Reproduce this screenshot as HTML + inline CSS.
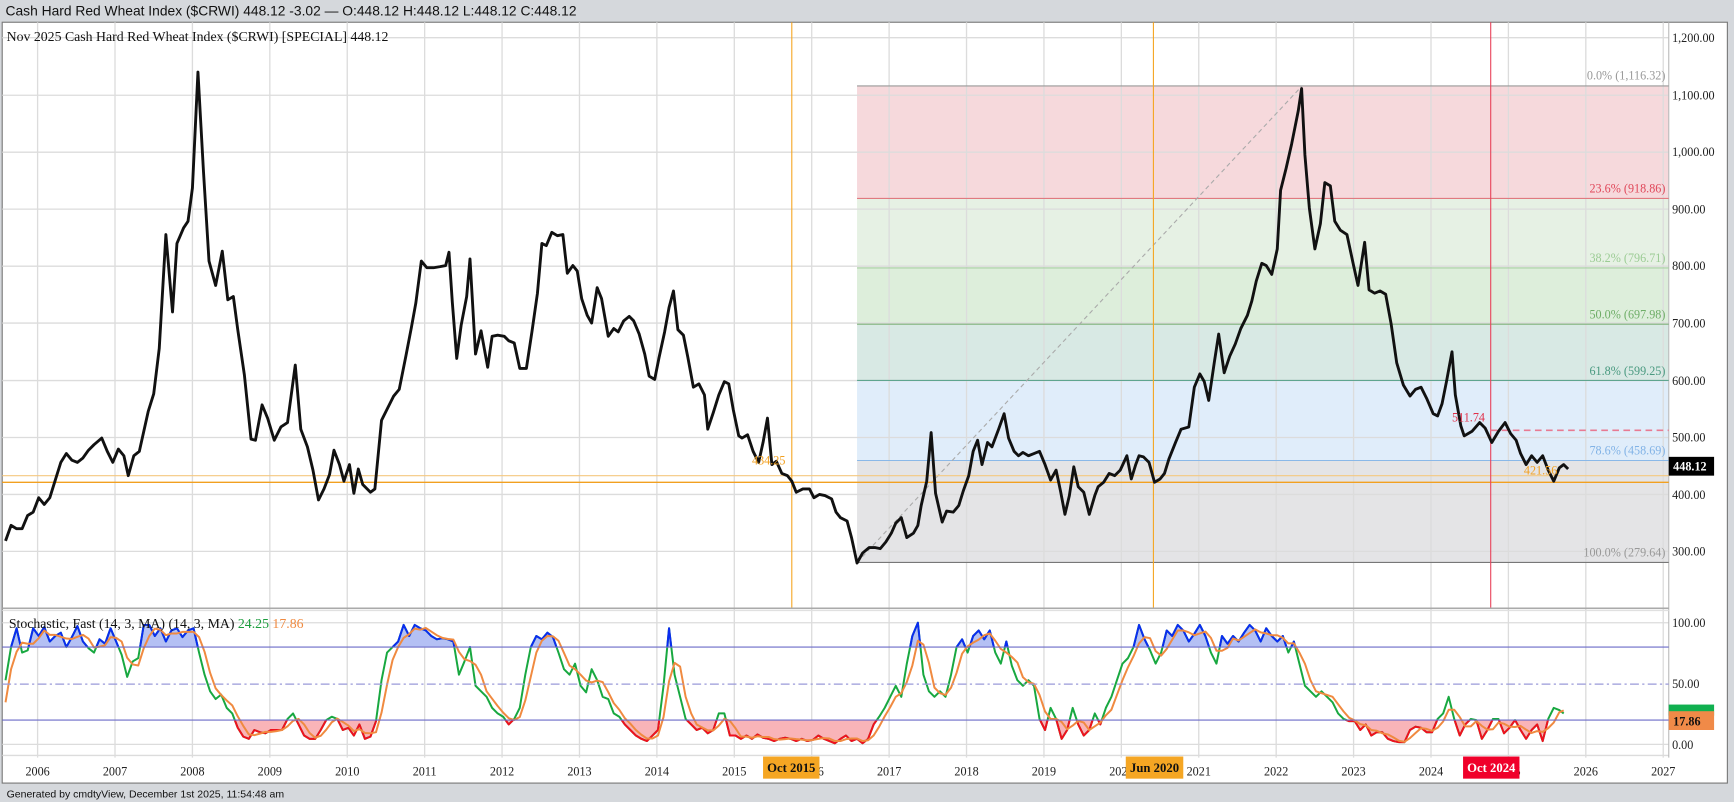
<!DOCTYPE html>
<html><head><meta charset="utf-8"><style>
html,body{margin:0;padding:0;background:#d5d8dc;overflow:hidden}
svg{display:block}
</style></head><body>
<svg width="1734" height="802" viewBox="0 0 1568 725" xmlns="http://www.w3.org/2000/svg">
<defs>
<clipPath id="above"><rect x="0" y="550" width="1509" height="35"/></clipPath>
<clipPath id="below"><rect x="0" y="651" width="1509" height="40"/></clipPath>
</defs>
<rect x="0" y="0" width="1568" height="725" fill="#d5d8dc"/>
<text x="5" y="14" font-family="Liberation Sans, sans-serif" font-size="12.5" fill="#111">Cash Hard Red Wheat Index ($CRWI) 448.12 -3.02 — O:448.12 H:448.12 L:448.12 C:448.12</text>
<rect x="2" y="20" width="1560" height="688" fill="#fff" stroke="#777" stroke-width="1"/>
<rect x="775" y="77.6" width="734" height="101.7" fill="#f6d9dc"/>
<rect x="775" y="179.3" width="734" height="62.9" fill="#e6f1e4"/>
<rect x="775" y="242.2" width="734" height="50.8" fill="#ddeedb"/>
<rect x="775" y="293" width="734" height="50.9" fill="#d8e9e4"/>
<rect x="775" y="343.9" width="734" height="72.4" fill="#e0edfa"/>
<rect x="775" y="416.3" width="734" height="92.2" fill="#e4e4e6"/>
<g stroke="#dcdcdc" stroke-width="1.2">
<line x1="2" x2="1509" y1="34" y2="34"/><line x1="2" x2="1509" y1="86" y2="86"/><line x1="2" x2="1509" y1="137.5" y2="137.5"/><line x1="2" x2="1509" y1="189" y2="189"/><line x1="2" x2="1509" y1="240.6" y2="240.6"/><line x1="2" x2="1509" y1="292" y2="292"/><line x1="2" x2="1509" y1="344" y2="344"/><line x1="2" x2="1509" y1="395.5" y2="395.5"/><line x1="2" x2="1509" y1="447" y2="447"/><line x1="2" x2="1509" y1="498.5" y2="498.5"/>
<line x1="2" x2="1509" y1="563" y2="563"/><line x1="2" x2="1509" y1="673" y2="673"/><line x1="2" x2="1509" y1="683" y2="683"/>
<line x1="34" x2="34" y1="20" y2="685"/><line x1="104" x2="104" y1="20" y2="685"/><line x1="174" x2="174" y1="20" y2="685"/><line x1="244" x2="244" y1="20" y2="685"/><line x1="314" x2="314" y1="20" y2="685"/><line x1="384" x2="384" y1="20" y2="685"/><line x1="454" x2="454" y1="20" y2="685"/><line x1="524" x2="524" y1="20" y2="685"/><line x1="594" x2="594" y1="20" y2="685"/><line x1="664" x2="664" y1="20" y2="685"/><line x1="734" x2="734" y1="20" y2="685"/><line x1="804" x2="804" y1="20" y2="685"/><line x1="874" x2="874" y1="20" y2="685"/><line x1="944" x2="944" y1="20" y2="685"/><line x1="1014" x2="1014" y1="20" y2="685"/><line x1="1084" x2="1084" y1="20" y2="685"/><line x1="1154" x2="1154" y1="20" y2="685"/><line x1="1224" x2="1224" y1="20" y2="685"/><line x1="1294" x2="1294" y1="20" y2="685"/><line x1="1364" x2="1364" y1="20" y2="685"/><line x1="1434" x2="1434" y1="20" y2="685"/><line x1="1504" x2="1504" y1="20" y2="685"/>
</g>
<line x1="1509" x2="1509" y1="20" y2="685" stroke="#bbb" stroke-width="1"/>
<line x1="775" x2="1509" y1="77.6" y2="77.6" stroke="#999"/>
<line x1="775" x2="1509" y1="179.3" y2="179.3" stroke="#e07a80"/>
<line x1="775" x2="1509" y1="242.2" y2="242.2" stroke="#a8d0a2"/>
<line x1="775" x2="1509" y1="293" y2="293" stroke="#7fb27a"/>
<line x1="775" x2="1509" y1="343.9" y2="343.9" stroke="#5fa58f"/>
<line x1="775" x2="1509" y1="416.3" y2="416.3" stroke="#8ab8e8"/>
<line x1="775" x2="1509" y1="508.5" y2="508.5" stroke="#777"/>
<line x1="775" y1="508.5" x2="1177" y2="78" stroke="#aaa" stroke-dasharray="4,3"/>
<g font-family="Liberation Serif, serif" font-size="11" text-anchor="end">
<text x="1506" y="72" fill="#999">0.0% (1,116.32)</text>
<text x="1506" y="174" fill="#e0485a">23.6% (918.86)</text>
<text x="1506" y="237" fill="#9ccc95">38.2% (796.71)</text>
<text x="1506" y="288" fill="#6fae68">50.0% (697.98)</text>
<text x="1506" y="339" fill="#4a9a80">61.8% (599.25)</text>
<text x="1506" y="411" fill="#82b3e6">78.6% (458.69)</text>
<text x="1506" y="503" fill="#999">100.0% (279.64)</text>
</g>
<line x1="2" x2="1509" y1="430" y2="430" stroke="#f5c880" stroke-width="1"/>
<line x1="2" x2="1509" y1="436" y2="436" stroke="#f2a020" stroke-width="1.2"/>
<line x1="716" x2="716" y1="20" y2="550" stroke="#f5a623" stroke-width="1"/>
<line x1="1043" x2="1043" y1="20" y2="550" stroke="#f5a623" stroke-width="1"/>
<line x1="1348" x2="1348" y1="20" y2="550" stroke="#e8425a" stroke-width="1"/>
<line x1="1348" x2="1509" y1="389" y2="389" stroke="#e87a92" stroke-width="1.5" stroke-dasharray="6,4"/>
<polyline fill="none" stroke="#111" stroke-width="2.6" stroke-linejoin="round" points="5,489 10,475 15,478 20,478 25,466 30,463 35,450 40,456 45,450 50,434 55,418 60,410 65,416 70,418 75,414 80,407 85,402 92,396 97,408 102,418 107,406 112,412 116,430 121,412 126,408 130,390 134,372 139,356 144,315 150,212 156,282 160,220 166,206 170,200 174,170 179,65 184,155 189,236 195,258 201,227 206,271 211,268 215,298 221,339 227,397 231,398 237,366 242,378 248,398 254,386 260,382 267,330 272,388 278,404 283,425 288,452 293,442 298,429 302,407 307,420 311,435 316,420 320,446 324,424 328,438 335,445 339,442 345,380 350,370 356,358 361,352 367,322 372,296 376,274 381,236 386,242 392,242 398,241 403,240 406,228 409,273 413,324 417,294 422,268 425,234 430,320 435,299 441,332 445,304 450,303 456,304 460,308 465,310 470,333 476,333 481,300 486,265 490,220 494,222 499,210 504,213 509,212 513,247 518,240 522,245 526,270 531,285 535,292 540,260 544,270 550,304 555,297 559,300 564,290 569,286 573,290 578,302 583,320 587,340 592,343 596,323 601,300 605,278 609,263 613,298 618,303 622,323 627,350 632,347 637,357 640,388 645,373 650,357 655,345 659,347 663,370 668,394 671,396 676,393 681,408 686,418 690,400 694,378 698,420 702,417 707,428 712,430 716,435 720,445 726,442 732,442 736,450 741,447 746,448 752,451 756,463 760,468 766,471 770,486 775,509 780,500 786,495 791,495 796,496 801,490 806,482 810,473 815,468 820,486 826,482 830,475 833,457 838,435 842,391 846,446 852,472 856,462 862,463 867,457 871,444 876,430 880,408 884,398 888,420 893,400 897,404 903,388 908,374 912,396 917,408 921,412 925,409 930,412 935,410 940,408 945,420 950,434 955,425 959,444 963,465 967,448 971,422 975,440 980,445 985,465 990,448 993,440 998,436 1003,428 1008,430 1013,425 1019,412 1023,433 1027,420 1030,412 1034,413 1039,418 1044,436 1049,433 1053,428 1057,415 1063,400 1068,388 1075,386 1080,350 1085,338 1089,345 1093,362 1098,328 1102,302 1107,337 1112,322 1117,311 1122,297 1128,285 1132,272 1136,254 1141,238 1145,240 1150,248 1155,225 1158,172 1163,152 1168,130 1174,100 1177,80 1180,140 1184,188 1189,225 1194,202 1198,165 1203,168 1207,200 1212,208 1218,212 1224,240 1228,258 1234,219 1238,262 1243,265 1248,263 1253,266 1258,293 1263,328 1269,348 1275,358 1280,352 1285,350 1290,360 1296,374 1300,376 1304,365 1308,345 1313,318 1316,357 1321,385 1324,394 1331,390 1338,382 1343,387 1349,400 1355,390 1361,382 1366,392 1371,398 1375,410 1380,420 1385,412 1390,418 1395,412 1400,425 1405,435 1410,423 1414,420 1418,424"/>
<g font-family="Liberation Serif, serif" font-size="11">
<text x="680" y="420" fill="#f2a020">434.25</text>
<text x="1313" y="381" fill="#e0304a">511.74</text>
<text x="1378" y="429" fill="#f2a020">421.56</text>
</g>
<text x="6" y="37" font-family="Liberation Serif, serif" font-size="12.5" fill="#111">Nov 2025 Cash Hard Red Wheat Index ($CRWI) [SPECIAL] 448.12</text>
<line x1="2" x2="1509" y1="550" y2="550" stroke="#aaa" stroke-width="1.5"/>
<line x1="2" x2="1509" y1="552" y2="552" stroke="#e0e0e0" stroke-width="1"/>
<g id="stoch"></g>
<line x1="2" x2="1509" y1="585" y2="585" stroke="#6b6bc8" stroke-width="1"/>
<line x1="2" x2="1509" y1="651" y2="651" stroke="#6b6bc8" stroke-width="1"/>
<line x1="2" x2="1509" y1="618.5" y2="618.5" stroke="#9a9ad8" stroke-width="1.2" stroke-dasharray="8,3,2,3"/>
<text x="8" y="568" font-family="Liberation Serif, serif" font-size="12.5" fill="#111">Stochastic, Fast (14, 3, MA)  (14, 3, MA) <tspan fill="#1a9c3c">24.25</tspan> <tspan fill="#f08a40">17.86</tspan></text>
<g font-family="Liberation Serif, serif" font-size="11" fill="#222">
<text x="1512" y="38">1,200.00</text><text x="1512" y="90">1,100.00</text><text x="1512" y="141">1,000.00</text><text x="1512" y="193">900.00</text><text x="1512" y="244">800.00</text><text x="1512" y="296">700.00</text><text x="1512" y="348">600.00</text><text x="1512" y="399">500.00</text><text x="1512" y="451">400.00</text><text x="1512" y="502">300.00</text>
<text x="1512" y="567">100.00</text><text x="1512" y="622">50.00</text><text x="1512" y="677">0.00</text>
</g>
<rect x="1509" y="413" width="41" height="17" fill="#000"/>
<text x="1513" y="425.5" font-family="Liberation Serif, serif" font-size="11" font-weight="bold" fill="#fff">448.12</text>
<rect x="1509" y="637" width="41" height="10" fill="#10b050"/>
<rect x="1509" y="643" width="41" height="17" fill="#f08a48"/>
<text x="1513" y="656" font-family="Liberation Serif, serif" font-size="11" font-weight="bold" fill="#111">17.86</text>
<g font-family="Liberation Serif, serif" font-size="11" fill="#222" text-anchor="middle">
<text x="34" y="701">2006</text><text x="104" y="701">2007</text><text x="174" y="701">2008</text><text x="244" y="701">2009</text><text x="314" y="701">2010</text><text x="384" y="701">2011</text><text x="454" y="701">2012</text><text x="524" y="701">2013</text><text x="594" y="701">2014</text><text x="664" y="701">2015</text><text x="734" y="701">2016</text><text x="804" y="701">2017</text><text x="874" y="701">2018</text><text x="944" y="701">2019</text><text x="1014" y="701">2020</text><text x="1084" y="701">2021</text><text x="1154" y="701">2022</text><text x="1224" y="701">2023</text><text x="1294" y="701">2024</text><text x="1364" y="701">2025</text><text x="1434" y="701">2026</text><text x="1504" y="701">2027</text>
</g>
<rect x="690" y="684" width="51" height="20" fill="#f5a623"/>
<text x="715.5" y="698" text-anchor="middle" font-family="Liberation Serif, serif" font-size="11.5" font-weight="bold" fill="#111">Oct 2015</text>
<rect x="1018" y="684" width="52" height="20" fill="#f5a623"/>
<text x="1044" y="698" text-anchor="middle" font-family="Liberation Serif, serif" font-size="11.5" font-weight="bold" fill="#111">Jun 2020</text>
<rect x="1323" y="684" width="51" height="20" fill="#f0002a"/>
<text x="1348.5" y="698" text-anchor="middle" font-family="Liberation Serif, serif" font-size="11.5" font-weight="bold" fill="#fff">Oct 2024</text>
<text x="6" y="721" font-family="Liberation Sans, sans-serif" font-size="9.5" fill="#111">Generated by cmdtyView, December 1st 2025, 11:54:48 am</text>
</svg>
<script>
var K=[[5,615],[10,585],[15,568],[20,590],[25,588],[30,568],[35,575],[40,567],[45,580],[50,575],[55,572],[60,585],[65,576],[70,566],[75,580],[80,586],[85,590],[90,578],[95,582],[100,568],[105,580],[110,592],[115,612],[120,598],[125,595],[130,565],[135,565],[140,575],[145,568],[150,580],[155,570],[160,568],[165,576],[170,570],[175,568],[180,590],[185,610],[190,625],[195,632],[200,628],[205,640],[210,645],[215,658],[220,666],[225,668],[230,660],[235,662],[240,663],[245,660],[250,660],[255,660],[260,650],[265,645],[270,655],[275,665],[280,668],[285,668],[290,660],[295,651],[300,648],[305,650],[310,660],[315,658],[320,665],[325,655],[330,668],[335,666],[340,652],[345,615],[350,590],[355,585],[360,580],[365,565],[370,575],[375,565],[380,568],[385,570],[390,575],[395,578],[400,577],[405,578],[410,580],[415,610],[420,598],[425,585],[430,620],[435,625],[440,630],[445,640],[450,645],[455,648],[460,655],[465,650],[470,640],[475,610],[480,585],[485,575],[490,578],[495,572],[500,576],[505,590],[510,605],[515,610],[520,600],[525,620],[530,626],[535,605],[540,615],[545,630],[550,632],[555,645],[560,648],[565,655],[570,660],[575,665],[580,668],[585,670],[590,665],[595,660],[600,620],[605,568],[610,610],[615,630],[620,650],[625,655],[630,660],[635,658],[640,663],[645,660],[650,645],[655,645],[660,665],[665,665],[670,668],[675,665],[680,668],[685,664],[690,667],[695,668],[700,670],[705,668],[710,667],[715,668],[720,670],[725,668],[730,670],[735,669],[740,665],[745,668],[750,670],[755,672],[760,668],[765,665],[770,670],[775,668],[780,672],[785,668],[790,655],[795,648],[800,640],[805,630],[810,620],[815,630],[820,600],[825,575],[830,563],[835,610],[840,625],[845,630],[850,625],[855,630],[860,610],[865,585],[870,578],[875,590],[880,575],[885,570],[890,578],[895,570],[900,590],[905,600],[910,580],[915,602],[920,615],[925,620],[930,615],[935,620],[940,650],[945,660],[950,640],[955,650],[960,668],[965,660],[970,640],[975,655],[980,665],[985,660],[990,645],[995,655],[1000,640],[1005,630],[1010,615],[1015,600],[1020,595],[1025,585],[1030,565],[1035,578],[1040,588],[1045,600],[1050,590],[1055,570],[1060,575],[1065,565],[1070,570],[1075,580],[1080,573],[1085,565],[1090,575],[1095,590],[1100,600],[1105,575],[1110,582],[1115,575],[1120,580],[1125,572],[1130,565],[1135,570],[1140,580],[1145,568],[1150,575],[1155,580],[1160,575],[1165,590],[1170,580],[1175,600],[1180,620],[1185,625],[1190,630],[1195,625],[1200,630],[1205,635],[1210,645],[1215,650],[1220,652],[1225,652],[1230,660],[1235,655],[1240,665],[1245,662],[1250,662],[1255,668],[1260,670],[1265,671],[1270,671],[1275,660],[1280,657],[1285,658],[1290,662],[1295,662],[1300,650],[1305,645],[1310,630],[1315,650],[1320,665],[1325,655],[1330,650],[1335,651],[1340,668],[1345,660],[1350,650],[1355,650],[1360,663],[1365,658],[1370,651],[1375,660],[1380,668],[1385,660],[1390,655],[1395,670],[1400,650],[1405,640],[1410,642],[1414,645]];
var D=K.map(function(p,i){var a=K[Math.max(0,i-1)][1],b=K[Math.max(0,i-2)][1];var v=i<2?p[1]+20:(p[1]+a+b)/3;return [p[0],v];});
function pts(a){return a.map(function(p){return p[0]+','+p[1].toFixed(1)}).join(' ');}
var s=pts(K),x0=K[0][0],x1=K[K.length-1][0];
var ns='http://www.w3.org/2000/svg',g=document.getElementById('stoch');
function add(tag,attrs){var e=document.createElementNS(ns,tag);for(var k in attrs)e.setAttribute(k,attrs[k]);g.appendChild(e);}
add('polygon',{points:x0+',585 '+s+' '+x1+',585',fill:'#b4c0f4','clip-path':'url(#above)'});
add('polygon',{points:x0+',651 '+s+' '+x1+',651',fill:'#f9b4b8','clip-path':'url(#below)'});
add('polyline',{points:s,fill:'none',stroke:'#18a840','stroke-width':'1.8','stroke-linejoin':'round'});
add('polyline',{points:s,fill:'none',stroke:'#0a2cf0','stroke-width':'1.8','stroke-linejoin':'round','clip-path':'url(#above)'});
add('polyline',{points:s,fill:'none',stroke:'#f0101e','stroke-width':'1.8','stroke-linejoin':'round','clip-path':'url(#below)'});
add('polyline',{points:pts(D),fill:'none',stroke:'#f08a40','stroke-width':'1.8','stroke-linejoin':'round'});
</script>
</body></html>
